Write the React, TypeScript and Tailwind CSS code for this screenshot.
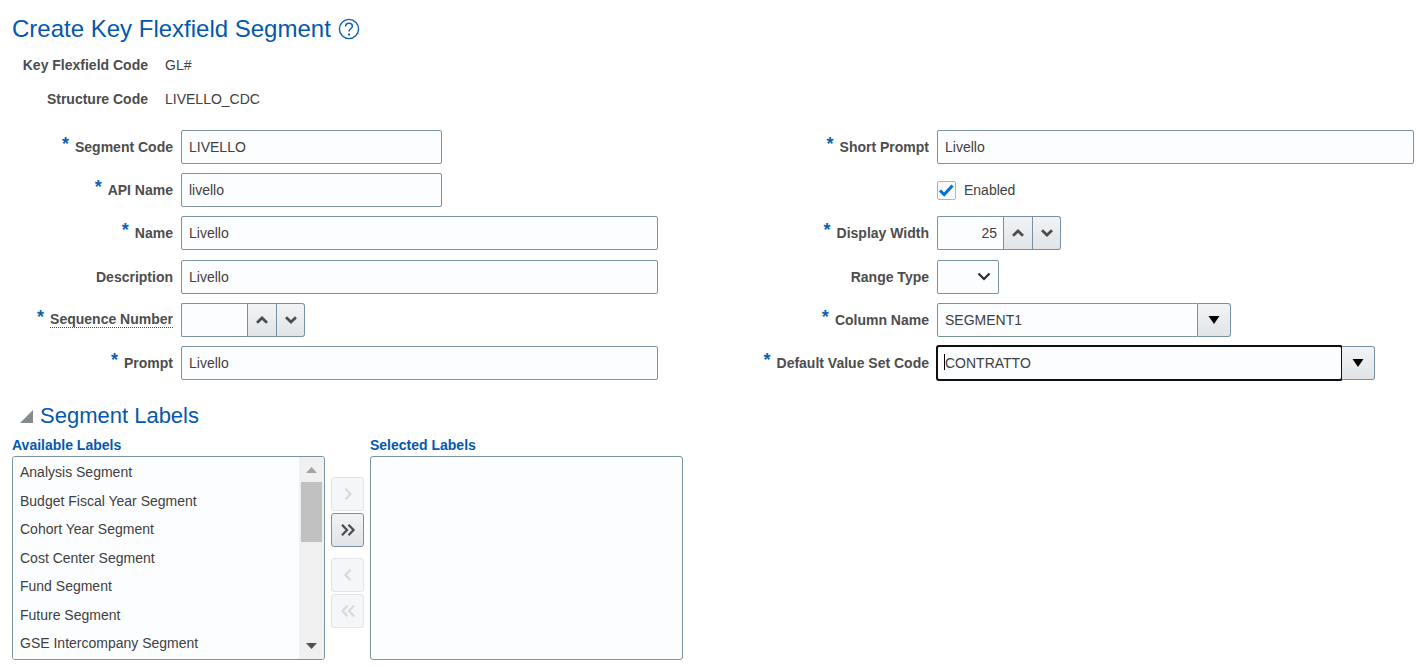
import { useState } from "react";
import type { ReactNode } from "react";

const labels = [
  "Analysis Segment",
  "Budget Fiscal Year Segment",
  "Cohort Year Segment",
  "Cost Center Segment",
  "Fund Segment",
  "Future Segment",
  "GSE Intercompany Segment",
];

const box = "h-[34px] border border-[#7b929f] bg-[#fcfdff] px-[7px] text-[#404040]";
const stepBtn =
  "flex h-[34px] items-center justify-center border border-[#7890a3] bg-linear-to-b from-[#f2f3f5] to-[#e1e5e8]";

type RowProps = {
  id: string;
  label: string;
  required?: boolean;
  hint?: boolean;
  side: "left" | "right";
  children: ReactNode;
};

const Row = ({ id, label, required, hint, side, children }: RowProps) => {
  return (
    <div className="flex h-[34px] items-center gap-2">
      <label
        htmlFor={id}
        className={`flex shrink-0 items-center justify-end font-bold text-[#4d4d4d] ${
          side === "left" ? "w-[161px]" : "w-[216px]"
        }`}
      >
        {required && (
          <span className="mr-1.5 mb-1.5 text-[18px] leading-4 text-[#0b62b0]">*</span>
        )}
        <span className={hint ? "border-b border-dotted border-[#4a4a4a] leading-4" : "leading-4"}>
          {label}
        </span>
      </label>
      {children}
    </div>
  );
};

const Chevron = ({ down }: { down?: boolean }) => (
  <svg width="12" height="8" viewBox="0 0 12 8" fill="none" stroke="#4d4d4d" strokeWidth="2.8">
    <path d={down ? "M1 1.3 6 6l5-4.7" : "M1 6.7 6 2l5 4.7"} />
  </svg>
);

const Spinner = ({ id, initial }: { id: string; initial: string }) => {
  const [value, setValue] = useState(initial);
  const step = (n: number) => setValue(String(Number(value) + n));
  return (
    <div className="flex">
      <input
        id={id}
        value={value}
        onChange={(e) => setValue(e.target.value)}
        className={`${box} w-[66px] rounded-l-[2px] border-r-0 pr-[6px] text-right`}
      />
      <button type="button" aria-label="Increment" onClick={() => step(1)} className={`${stepBtn} w-[30px]`}>
        <Chevron />
      </button>
      <button
        type="button"
        aria-label="Decrement"
        onClick={() => step(-1)}
        className={`${stepBtn} w-[28px] rounded-r-[3px] border-l-0`}
      >
        <Chevron down />
      </button>
    </div>
  );
};

const DropButton = ({ name }: { name: string }) => (
  <button type="button" aria-label={name} className={`${stepBtn} w-[33px] rounded-r-[3px] border-l-0`}>
    <svg width="12" height="8" viewBox="0 0 12 8">
      <path d="M0.5 0h11L6 8z" fill="#000000" />
    </svg>
  </button>
);

const ShuttleButton = ({ name, d, disabled }: { name: string; d: string; disabled?: boolean }) => (
  <button
    type="button"
    aria-label={name}
    disabled={disabled}
    className={`flex h-[34px] w-[33px] items-center justify-center rounded-[3px] border ${
      disabled
        ? "border-[#e1e5e9] bg-[#f5f6f8] text-[#d8d9db]"
        : "border-[#7890a3] bg-linear-to-b from-[#f2f3f5] to-[#e1e5e8] text-[#4d4d4d]"
    }`}
  >
    <svg width="16" height="14" viewBox="0 0 16 14" fill="none" stroke="currentColor" strokeWidth="2.3">
      <path d={d} />
    </svg>
  </button>
);

const App = () => {
  return (
    <main className="pt-3 pr-0.5 pb-2 pl-3 font-['Liberation_Sans',Arial,sans-serif] text-[14px] leading-4 text-[#404040]">
      <header className="flex items-center gap-[7px]">
        <h1 className="text-[24px] leading-[34px] text-[#0458ae]">Create Key Flexfield Segment</h1>
        <button type="button" aria-label="Help">
          <svg width="22" height="22" viewBox="0 0 22 22" fill="none" stroke="#0f62b5" strokeWidth="1.4">
            <circle cx="11" cy="11" r="9.6" />
            <path d="M7.6 8.6c0-2 1.4-3.3 3.4-3.3s3.4 1.2 3.4 2.9c0 2.5-3.4 2.6-3.4 5.2" strokeWidth="1.5" />
            <path d="M10 15.4h2v2h-2z" fill="#0f62b5" stroke="none" />
          </svg>
        </button>
      </header>

      <dl className="mt-[11px] grid grid-cols-[136px_1fr] gap-x-[17px] gap-y-[18px]">
        <dt className="text-right font-bold text-[#4d4d4d]">Key Flexfield Code</dt>
        <dd>GL#</dd>
        <dt className="text-right font-bold text-[#4d4d4d]">Structure Code</dt>
        <dd>LIVELLO_CDC</dd>
      </dl>

      <form className="mt-[23px] grid h-[250px] grid-cols-2">
        <div className="flex flex-col justify-between">
          <Row side="left" id="segmentCode" label="Segment Code" required>
            <input id="segmentCode" defaultValue="LIVELLO" className={`${box} w-[261px] rounded-[2px]`} />
          </Row>
          <Row side="left" id="apiName" label="API Name" required>
            <input id="apiName" defaultValue="livello" className={`${box} w-[261px] rounded-[2px]`} />
          </Row>
          <Row side="left" id="name" label="Name" required>
            <input id="name" defaultValue="Livello" className={`${box} w-[477px] rounded-[2px]`} />
          </Row>
          <Row side="left" id="description" label="Description">
            <input id="description" defaultValue="Livello" className={`${box} w-[477px] rounded-[2px]`} />
          </Row>
          <Row side="left" id="sequence" label="Sequence Number" required hint>
            <Spinner id="sequence" initial="" />
          </Row>
          <Row side="left" id="prompt" label="Prompt" required>
            <input id="prompt" defaultValue="Livello" className={`${box} w-[477px] rounded-[2px]`} />
          </Row>
        </div>

        <div className="flex flex-col justify-between">
          <Row side="right" id="shortPrompt" label="Short Prompt" required>
            <input id="shortPrompt" defaultValue="Livello" className={`${box} w-[477px] rounded-[2px]`} />
          </Row>
          <div className="flex h-[34px] items-center gap-2 pl-[224px]">
            <span className="relative flex">
              <input
                id="enabled"
                type="checkbox"
                defaultChecked
                className="peer size-[19px] appearance-none rounded-[2px] border border-[#a9b6c1] bg-[#f9fafb]"
              />
              <svg
                className="pointer-events-none absolute inset-0 hidden peer-checked:block"
                width="19"
                height="19"
                viewBox="0 0 19 19"
                fill="none"
                stroke="#0572ce"
                strokeWidth="3"
              >
                <path d="M3 9.5 7.2 13.5 15.5 4.5" />
              </svg>
            </span>
            <label htmlFor="enabled">Enabled</label>
          </div>
          <Row side="right" id="displayWidth" label="Display Width" required>
            <Spinner id="displayWidth" initial="25" />
          </Row>
          <Row side="right" id="rangeType" label="Range Type">
            <div className="relative">
              <select id="rangeType" className={`${box} w-[62px] appearance-none rounded-[2px]`}>
                <option value=""></option>
              </select>
              <svg
                className="pointer-events-none absolute top-[12px] right-2"
                width="14"
                height="9"
                viewBox="0 0 14 9"
                fill="none"
                stroke="#262626"
                strokeWidth="2"
              >
                <path d="M1.5 1.5 7 7l5.5-5.5" />
              </svg>
            </div>
          </Row>
          <Row side="right" id="columnName" label="Column Name" required>
            <div className="flex">
              <input id="columnName" defaultValue="SEGMENT1" className={`${box} w-[261px] rounded-l-[2px]`} />
              <DropButton name="Search Column Name" />
            </div>
          </Row>
          <Row side="right" id="valueSet" label="Default Value Set Code" required>
            <div className="relative flex">
              <input
                id="valueSet"
                defaultValue="CONTRATTO"
                className={`${box} w-[405px] rounded-[2px] outline-2 -outline-offset-1 outline-[#101010]`}
              />
              <span className="pointer-events-none absolute top-2 left-[7px] h-4 w-px bg-black" />
              <DropButton name="Search Default Value Set Code" />
            </div>
          </Row>
        </div>
      </form>

      <section className="mt-[21px]">
        <h2 className="text-[22px] leading-[30px] text-[#0458ae]">
          <button type="button" aria-expanded="true" className="flex items-center gap-[7px] pl-2">
            <svg width="13" height="13" viewBox="0 0 13 13">
              <path d="M13 0v13H0z" fill="#868b90" />
            </svg>
            Segment Labels
          </button>
        </h2>

        <div className="mt-1.5 flex">
          <div className="w-[313px]">
            <label htmlFor="available" className="block font-bold text-[#0458ae]">
              Available Labels
            </label>
            <div className="mt-[3px] flex h-[204px] overflow-hidden rounded-[3px] border border-[#7b929f] bg-[#fcfdff]">
              <select
                id="available"
                multiple
                size={7}
                className="h-full flex-1 appearance-none overflow-hidden bg-[#fcfdff] pt-px text-[#404040]"
              >
                {labels.map((label) => (
                  <option key={label} className="h-7 px-[7px] py-1.5 odd:mb-px">
                    {label}
                  </option>
                ))}
              </select>
              <div className="flex w-[25px] flex-col items-center bg-[#f0f0f0]">
                <svg className="mt-[10px]" width="11" height="6" viewBox="0 0 11 6">
                  <path d="M5.5 0 11 6H0z" fill="#a3a3a3" />
                </svg>
                <div className="mt-[9px] h-[60px] w-[21px] bg-[#c1c1c1]" />
                <svg className="mt-auto mb-[10px]" width="11" height="6" viewBox="0 0 11 6">
                  <path d="M0 0h11L5.5 6z" fill="#505050" />
                </svg>
              </div>
            </div>
          </div>

          <div className="mx-1.5 flex flex-col gap-0.5 pt-10">
            <ShuttleButton name="Move selected" d="M5.5 1.8 10.5 7l-5 5.2" disabled />
            <ShuttleButton name="Move all" d="M2 1.8 7 7l-5 5.2M8.5 1.8l5 5.2-5 5.2" />
            <div className="h-[7px]" />
            <ShuttleButton name="Remove selected" d="M10.5 1.8 5.5 7l5 5.2" disabled />
            <ShuttleButton name="Remove all" d="M7.5 1.8l-5 5.2 5 5.2M14 1.8 9 7l5 5.2" disabled />
          </div>

          <div className="w-[313px]">
            <label htmlFor="selected" className="block font-bold text-[#0458ae]">
              Selected Labels
            </label>
            <select
              id="selected"
              multiple
              className="mt-[3px] block h-[204px] w-full appearance-none overflow-hidden rounded-[3px] border border-[#7b929f] bg-[#fcfdff]"
            />
          </div>
        </div>
      </section>
    </main>
  );
};

export default App;
